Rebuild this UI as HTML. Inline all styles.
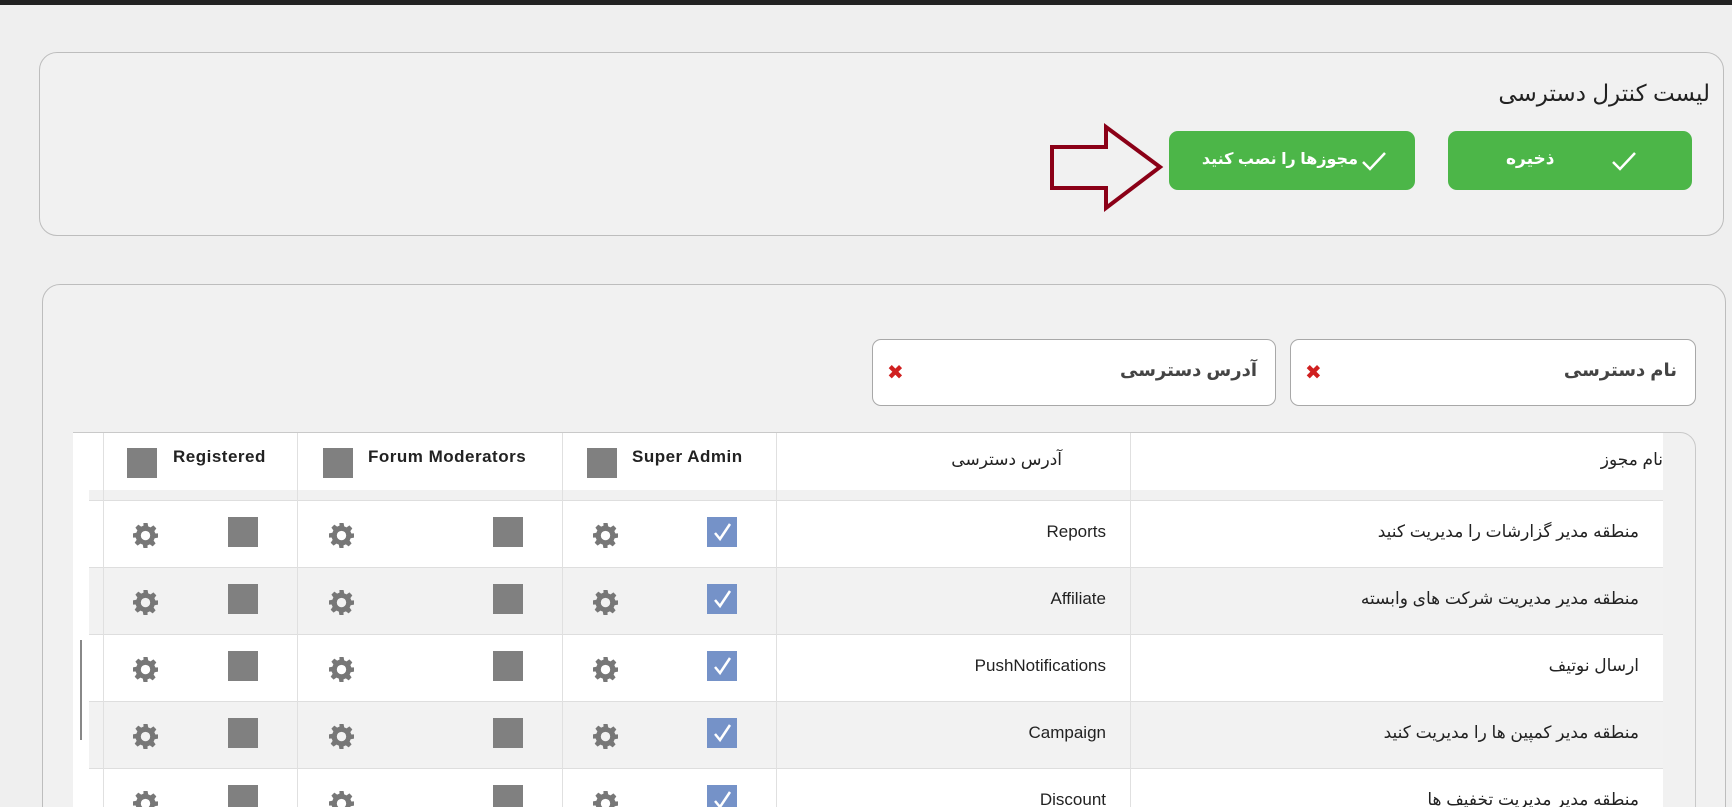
<!DOCTYPE html>
<html style="overflow:hidden;width:1732px;height:807px"><head><meta charset="utf-8">
<style>
*{box-sizing:border-box;margin:0;padding:0}
html,body{width:1732px;height:807px;overflow:hidden}
body{background:#efefef;font-family:"Liberation Sans","DejaVu Sans",sans-serif;color:#222}
#wrap{position:relative;width:1732px;height:807px;overflow:hidden}
.topbar{position:absolute;left:0;top:0;width:1732px;height:5px;background:#222}
.card{position:absolute;border:1px solid #bdbdbd;border-radius:18px;background:#f1f1f1}
.btn{position:absolute;background:#4cb648;border-radius:9px;color:#fff;font-weight:bold;font-size:16px;direction:rtl}
.filter{position:absolute;top:339px;height:67px;background:#fff;border:1px solid #a8a8a8;border-radius:9px}
.filter .t{position:absolute;right:18px;top:20px;font-size:18px;font-weight:bold;color:#444;direction:rtl}
.filter .x{position:absolute;left:14px;top:20px;color:#d02020;font-size:20px;font-weight:bold}
.abs{position:absolute}
.vl{position:absolute;width:1px;background:#e0e0e0}
.hl{position:absolute;height:1px;background:#dedede}
.cb{position:absolute;width:30px;height:30px;background:#808080}
.txt{position:absolute;font-size:17px;color:#222;white-space:nowrap}
.hd{position:absolute;font-size:17px;font-weight:bold;color:#222;letter-spacing:.5px;white-space:nowrap}
</style></head><body><div id="wrap">
<div class="topbar"></div>
<div class="card" style="left:39px;top:52px;width:1685px;height:184px"></div>
<div class="abs" style="right:22px;top:80px;font-size:23px;direction:rtl;color:#222">لیست کنترل دسترسی</div>
<div class="btn" style="left:1448px;top:131px;width:244px;height:59px">
 <span class="abs" style="left:58px;top:18px;font-size:17px">ذخیره</span>
 <svg class="abs" style="left:163px;top:19px" width="26" height="22" viewBox="0 0 26 22"><path d="M2 12 L9 19 L24 3" stroke="#fff" stroke-width="2.5" fill="none"/></svg>
</div>
<div class="btn" style="left:1169px;top:131px;width:246px;height:59px">
 <span class="abs" style="right:57px;top:18px;font-size:16px;white-space:nowrap">مجوزها را نصب کنید</span>
 <svg class="abs" style="left:192px;top:19px" width="26" height="22" viewBox="0 0 26 22"><path d="M2 12 L9 19 L24 3" stroke="#fff" stroke-width="2.5" fill="none"/></svg>
</div>
<svg class="abs" style="left:1046px;top:122px" width="122" height="92" viewBox="1046 122 122 92"><path d="M1052 147 L1106 147 L1106 127 L1160 167 L1106 208 L1106 188 L1052 188 Z" fill="none" stroke="#8b0017" stroke-width="4" stroke-linejoin="miter"/></svg>

<div class="card" style="left:42px;top:284px;width:1684px;height:600px"></div>
<div class="filter" style="left:1290px;width:406px"><span class="t">نام دسترسی</span><span class="x">✖</span></div>
<div class="filter" style="left:872px;width:404px"><span class="t">آدرس دسترسی</span><span class="x">✖</span></div>

<div class="abs" style="left:73px;top:432px;width:1623px;height:450px;border:1px solid #c9c9c9;border-radius:0 16px 0 0;background:#f1f1f1"></div>
<div class="abs" style="left:73px;top:433px;width:1590px;height:450px;background:#fff"></div>
<div class="abs" style="left:89px;top:490px;width:1574px;height:10px;background:#f1f1f1"></div>
<div class="abs" style="left:89px;top:567px;width:1574px;height:67px;background:#f2f2f2"></div>
<div class="abs" style="left:89px;top:701px;width:1574px;height:67px;background:#f2f2f2"></div>
<div class="hl" style="left:89px;top:500px;width:1574px"></div>
<div class="hl" style="left:89px;top:567px;width:1574px"></div>
<div class="hl" style="left:89px;top:634px;width:1574px"></div>
<div class="hl" style="left:89px;top:701px;width:1574px"></div>
<div class="hl" style="left:89px;top:768px;width:1574px"></div>
<div class="vl" style="left:103px;top:433px;height:420px"></div>
<div class="vl" style="left:297px;top:433px;height:420px"></div>
<div class="vl" style="left:562px;top:433px;height:420px"></div>
<div class="vl" style="left:776px;top:433px;height:420px"></div>
<div class="vl" style="left:1130px;top:433px;height:420px"></div>
<div class="abs" style="left:80px;top:640px;width:2px;height:100px;background:#888"></div>

<div class="cb" style="left:127px;top:448px"></div><div class="hd" style="left:173px;top:447px">Registered</div>
<div class="cb" style="left:323px;top:448px"></div><div class="hd" style="left:368px;top:447px">Forum Moderators</div>
<div class="cb" style="left:587px;top:448px"></div><div class="hd" style="left:632px;top:447px">Super Admin</div>
<div class="txt" style="right:670px;top:450px;direction:rtl">آدرس دسترسی</div>
<div class="txt" style="right:69px;top:450px;direction:rtl">نام مجوز</div>

<svg width="0" height="0" style="position:absolute"><defs>
<symbol id="g" viewBox="0 0 24 24"><path fill="#777" fill-rule="evenodd" d="M10 0h4l.6 3.2 2.3 1 2.7-1.9 2.8 2.8-1.9 2.7 1 2.3L24 10v4l-3.2.6-1 2.3 1.9 2.7-2.8 2.8-2.7-1.9-2.3 1L14 24h-4l-.6-3.2-2.3-1-2.7 1.9-2.8-2.8 1.9-2.7-1-2.3L0 14v-4l3.2-.6 1-2.3-1.9-2.7 2.8-2.8 2.7 1.9 2.3-1zM12 7.5a4.5 4.5 0 1 0 0 9a4.5 4.5 0 1 0 0-9z"/></symbol>
<symbol id="c" viewBox="0 0 30 30"><rect width="30" height="30" fill="#7592c8"/><path d="M8 16 L13 22 L23 7" stroke="#fff" stroke-width="2.5" fill="none"/></symbol>
</defs></svg>

<div id="rows"></div>
</div>
<script>
var data=[["منطقه مدیر گزارشات را مدیریت کنید","Reports"],["منطقه مدیر مدیریت شرکت های وابسته","Affiliate"],["ارسال نوتیف","PushNotifications"],["منطقه مدیر کمپین ها را مدیریت کنید","Campaign"],["منطقه مدیر مدیریت تخفیف ها","Discount"]];
var h="";
data.forEach(function(d,i){var y=500+i*67;
h+='<svg class="abs" style="left:133px;top:'+(y+23)+'px" width="25" height="25"><use href="#g"/></svg>';
h+='<svg class="abs" style="left:329px;top:'+(y+23)+'px" width="25" height="25"><use href="#g"/></svg>';
h+='<svg class="abs" style="left:593px;top:'+(y+23)+'px" width="25" height="25"><use href="#g"/></svg>';
h+='<div class="cb" style="left:228px;top:'+(y+17)+'px"></div>';
h+='<div class="cb" style="left:493px;top:'+(y+17)+'px"></div>';
h+='<svg class="abs" style="left:707px;top:'+(y+17)+'px" width="30" height="30"><use href="#c"/></svg>';
h+='<div class="txt" style="right:626px;top:'+(y+22)+'px">'+d[1]+'</div>';
h+='<div class="txt" style="right:93px;top:'+(y+22)+'px;direction:rtl">'+d[0]+'</div>';
});
document.getElementById("rows").innerHTML=h;
</script>
</body></html>
